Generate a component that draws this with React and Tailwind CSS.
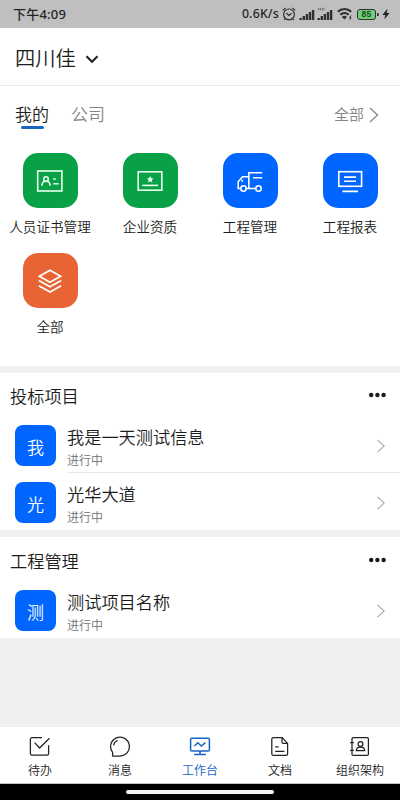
import React, { useState } from 'react';

const SignalBars = ({ hd }) => (
    <svg width="16" height="14" viewBox="0 0 16 14" fill="#303030">
        <rect x="0.5" y="11" width="2.4" height="2" />
        <rect x="3.6" y="9" width="2.4" height="4" />
        <rect x="6.7" y="7" width="2.4" height="6" />
        <rect x="9.8" y="5" width="2.4" height="8" />
        <rect x="12.9" y="3" width="2.4" height="10" />
        {hd && <path d="M1.5 1v2.4M3.5 1v2.4M1.5 2.2h2M5 1.2v2h1.2l1-.5V1.6l-.8-.4z" fill="none" stroke="#555" strokeWidth="0.6" />}
    </svg>
);

const StatusBar = () => (
    <div className="h-7 shrink-0 bg-[#bfbfbf] text-[#242424] flex items-center pl-[13px] pr-[10px] font-['Noto_Sans','Noto_Sans_CJK_SC',sans-serif]">
        <span className="text-[13px] leading-7 tracking-[0.2px] font-medium">下午4:09</span>
        <span className="ml-auto text-[12.3px] leading-7 tracking-[0.2px] font-medium">0.6K/s</span>
        <svg className="ml-[3px]" width="14" height="14" viewBox="0 0 14 14" fill="none" stroke="#303030" strokeWidth="1.2">
            <circle cx="7" cy="7.4" r="5.4" />
            <path d="M4.4 6.2 7 8.5l2.6-2.3M.8 3.4 3.6.9M13.2 3.4 10.4.9M3.3 11.6 2.2 13M10.7 11.6l1.1 1.4" />
        </svg>
        <span className="ml-[3px]"><SignalBars /></span>
        <span className="ml-[2px]"><SignalBars hd /></span>
        <svg className="ml-[4px]" width="16" height="14" viewBox="0 0 16 14" fill="none" stroke="#303030" strokeWidth="2">
            <path d="M.8 4.8c3.800-3.800 9.600-3.800 13.400 0M3.300 7.700c2.400-2.400 6-2.400 8.400 0" />
            <path d="m7.5 12.6-2.600-2.700c1.500-1.400 3.700-1.400 5.200 0z" fill="#303030" stroke="none" />
            <path d="M14 8.5 12.600 10.600h1.400l-1.200 2.200" strokeWidth="1" />
        </svg>
        <div className="ml-[4px] w-[19px] h-[11px] rounded-[3px] border border-[#303030] bg-[#6fce7b] flex items-center justify-center">
            <span className="text-[8.5px] leading-[9px] h-[9px] font-bold text-[#174d1e] font-['Liberation_Sans',sans-serif] tracking-[0.3px]">85</span>
        </div>
        <span className="w-[2px] h-[3px] ml-px rounded-r bg-[#303030]" />
        <svg className="ml-[3px]" width="8" height="12" viewBox="0 0 8 12" fill="#242424">
            <path d="M5.4.8.4 7h2.8L2.4 11.2 7.6 5H4.8z" />
        </svg>
    </div>
);

const CertIcon = () => (
    <svg width="28" height="24" viewBox="0 0 28 24" fill="none" stroke="#eafff0" strokeWidth="1.6">
        <rect x="1.7" y="2" width="24.2" height="20" />
        <circle cx="10" cy="10.1" r="2.3" />
        <path d="M5.9 16.7c.2-2.700 1.500-4.200 3.100-4.400M14.100 16.700c-.2-2.700-1.500-4.200-3.100-4.400" />
        <path d="M17.2 10h2.600M17.200 14.700h5.400" />
    </svg>
);

const AwardIcon = () => (
    <svg width="28" height="24" viewBox="0 0 28 24" fill="none" stroke="#eafff0" strokeWidth="1.6">
        <rect x="2.2" y="2.800" width="23.600" height="18.400" />
        <path d="M6.3 16.400h15.800" />
        <path d="m14.200 7.100 1.100 2.200 2.300.2-1.800 1.600.6 2.300-2.200-1.200-2.200 1.200.6-2.300-1.800-1.600 2.300-.2z" fill="#eafff0" stroke="none" />
    </svg>
);

const TruckIcon = () => (
    <svg width="28" height="24" viewBox="0 0 28 24" fill="none" stroke="#fff" strokeWidth="1.6">
        <path d="M26.2 3.8H12.8v15.400M4.800 19.500H2.200v-6.800l4.300-4.900h6.300M10.200 19.500h9.400" />
        <path d="M17 8.700h9.200M6.300 10.800v2" />
        <circle cx="7.5" cy="19.5" r="2.7" />
        <circle cx="22.5" cy="19.5" r="2.7" />
    </svg>
);

const ReportIcon = () => (
    <svg width="28" height="24" viewBox="0 0 28 24" fill="none" stroke="#fff" strokeWidth="1.6">
        <rect x="2.8" y="2.700" width="22.800" height="14.600" />
        <path d="M8 8.100h12M8 12.200h12M6.400 22.400h15.600" />
    </svg>
);

const LayersIcon = () => (
    <svg width="28" height="26" viewBox="0 0 28 26" fill="none" stroke="#fff" strokeWidth="1.7">
        <path d="M14 2.300 24.600 8.300 14 14.200 3.400 8.300z" />
        <path d="m2.800 12.600 11.200 6.200 11.200-6.200M2.800 17.800l11.200 6.200 11.200-6.200" />
    </svg>
);

const apps = [
    { label: '人员证书管理', color: 'bg-[#08a146]', Icon: CertIcon },
    { label: '企业资质', color: 'bg-[#08a146]', Icon: AwardIcon },
    { label: '工程管理', color: 'bg-[#0066ff]', Icon: TruckIcon },
    { label: '工程报表', color: 'bg-[#0066ff]', Icon: ReportIcon },
    { label: '全部', color: 'bg-[#e96435]', Icon: LayersIcon },
];

const Chevron = () => (
    <svg width="10" height="14" viewBox="0 0 10 14" fill="none" stroke="#aaa" strokeWidth="1.1">
        <path d="m1.5.8 6.7 6.2-6.7 6.2" />
    </svg>
);

const Dots = () => (
    <svg width="18" height="6" viewBox="0 0 18 6" fill="#1c1c1c">
        <circle cx="3.2" cy="3" r="2.2" />
        <circle cx="9.4" cy="3" r="2.2" />
        <circle cx="15.6" cy="3" r="2.2" />
    </svg>
);

const Project = ({ name, divider }) => (
    <div className="h-[57px] pl-[15px] flex">
        <div className="w-[41px] h-[41px] mt-[9px] rounded-[8px] bg-[#0066ff] text-white text-[17px] leading-[43px] text-center">
            {name[0]}
        </div>
        <div className={`ml-[11px] flex-1 flex items-center ${divider ? 'border-b border-[#e8e8e8]' : ''}`}>
            <div className="flex-1 self-start pt-[8px]">
                <div className="text-[17.2px] leading-[26px] text-[#1c1c1c]">{name}</div>
                <div className="text-[12px] leading-[18px] mt-px text-[#707070]">进行中</div>
            </div>
            <span className="mr-[14px] mt-[3px]"><Chevron /></span>
        </div>
    </div>
);

const Section = ({ title, projects }) => (
    <section className="bg-white mb-[7px]">
        <div className="pb-[7px] pl-[10px] pr-[14px] flex items-start justify-between">
            <h2 className="text-[17.2px] leading-[26px] text-[#1c1c1c]">{title}</h2>
            <span className="mt-[9px]"><Dots /></span>
        </div>
        {projects.map((name, i) => (
            <Project key={name} name={name} divider={i < projects.length - 1} />
        ))}
    </section>
);

const TodoIcon = () => (
    <svg width="22" height="22" viewBox="0 0 22 22" fill="none" stroke="currentColor" strokeWidth="1.25">
        <path d="M13 1.700H3a1.600 1.600 0 0 0-1.600 1.600v14.200A1.600 1.600 0 0 0 3 19.100h15a1.600 1.600 0 0 0 1.600-1.600V9.200" />
        <path d="m5.600 6.600 5 5.400 9.800-9.800" />
    </svg>
);

const MessageIcon = () => (
    <svg width="22" height="22" viewBox="0 0 22 22" fill="none" stroke="currentColor" strokeWidth="1.25">
        <path d="M3.600 19.600V16.400A9.400 9.400 0 1 1 11 20H3.200" />
        <path d="M4.600 9.400c.4-2.400 1.900-4.200 4-4.900" />
    </svg>
);

const WorkbenchIcon = () => (
    <svg width="22" height="22" viewBox="0 0 22 22" fill="none" stroke="currentColor" strokeWidth="1.5">
        <rect x="1.600" y="2.200" width="18.800" height="12.800" rx="1.300" />
        <path d="m5.400 10 3.400-3.200 3.600 3.200 4-3.400M11 15v3.400M5.200 18.400h11.600" />
    </svg>
);

const DocIcon = () => (
    <svg width="22" height="22" viewBox="0 0 22 22" fill="none" stroke="currentColor" strokeWidth="1.25">
        <path d="M13.200 1.600H4.400a1.600 1.600 0 0 0-1.600 1.600v14.600a1.600 1.600 0 0 0 1.600 1.600H17a1.600 1.600 0 0 0 1.600-1.600V7.400zM13 1.800v4.400a1.200 1.200 0 0 0 1.200 1.200h4.200" />
        <path d="M6.200 10.900h3.400M6.200 15.300h9.200" />
    </svg>
);

const ContactsIcon = () => (
    <svg width="22" height="22" viewBox="0 0 22 22" fill="none" stroke="currentColor" strokeWidth="1.25">
        <rect x="3" y="1.600" width="16.400" height="17.800" rx="1.200" />
        <path d="M1.200 6.500h3.600M1.200 14.300h3.600" />
        <circle cx="11.500" cy="8" r="2.400" />
        <path d="M7.300 14.600c0-2.400 1.700-3.600 4.200-3.600s4.200 1.200 4.200 3.600z" />
    </svg>
);

const navItems = [
    { label: '待办', Icon: TodoIcon },
    { label: '消息', Icon: MessageIcon },
    { label: '工作台', Icon: WorkbenchIcon },
    { label: '文档', Icon: DocIcon },
    { label: '组织架构', Icon: ContactsIcon },
];

const App = () => {
    const [activeNav, setActiveNav] = useState(2);

    return (
        <div className="w-[400px] h-[800px] flex flex-col overflow-hidden bg-[#efefef] font-['Noto_Sans_CJK_SC',sans-serif] font-[350]">
            <StatusBar />

            <header className="h-[58px] shrink-0 bg-white border-b border-[#e9e9e9] flex items-center pl-[15px]">
                <span className="text-[20.3px] leading-[30px] text-[#1c1c1c]">四川佳</span>
                <svg className="ml-[9px] mt-[5px]" width="14" height="9" viewBox="0 0 14 9" fill="none" stroke="#202020" strokeWidth="2">
                    <path d="m1.500 1.300 5.500 5.500 5.500-5.500" />
                </svg>
            </header>

            <section className="h-[280px] shrink-0 bg-white mb-[7px]">
                <div className="h-[67px] pt-[15px] pl-[15px] pr-[21px] flex items-start text-[17px] leading-[26px]">
                    <button className="flex flex-col items-center text-[#1c1c1c]">
                        我的
                        <span className="w-[23px] h-[3px] -mt-px rounded-full bg-[#1763c6]" />
                    </button>
                    <button className="ml-[22px] text-[#858585]">公司</button>
                    <button className="ml-auto flex items-center text-[15px] text-[#858585]">
                        全部
                        <svg className="ml-[5px] mt-px" width="10" height="16" viewBox="0 0 10 16" fill="none" stroke="#8b8b8b" strokeWidth="1.4">
                            <path d="m1 1 7.500 7L1 15" />
                        </svg>
                    </button>
                </div>
                <div className="grid grid-cols-4">
                    {apps.map(({ label, color, Icon }) => (
                        <div key={label} className="h-[100px] flex flex-col items-center">
                            <div className={`w-[55px] h-[55px] rounded-[15px] flex items-center justify-center ${color}`}>
                                <Icon />
                            </div>
                            <span className="mt-[8px] text-[13.6px] leading-[20px] text-[#1c1c1c] whitespace-nowrap">{label}</span>
                        </div>
                    ))}
                </div>
            </section>

            <div className="[&>section]:pt-[10px] [&>section:last-child]:pt-[11px]">
                <Section title="投标项目" projects={['我是一天测试信息', '光华大道']} />
                <Section title="工程管理" projects={['测试项目名称']} />
            </div>

            <nav className="mt-auto h-[57px] shrink-0 bg-white border-b border-[#c4c4c4] grid grid-cols-5">
                {navItems.map(({ label, Icon }, i) => (
                    <button
                        key={label}
                        onClick={() => setActiveNav(i)}
                        className={`flex flex-col items-center pt-[9px] ${i === activeNav ? 'text-[#1763c6]' : 'text-[#222]'}`}
                    >
                        <Icon />
                        <span className="mt-[3px] text-[12px] leading-[18px]">{label}</span>
                    </button>
                ))}
            </nav>
            <div className="h-4 shrink-0 bg-black flex justify-center">
                <span className="mt-[6px] w-[148px] h-[4px] rounded-full bg-[#f3f3f3]" />
            </div>
        </div>
    );
};

export default App;
